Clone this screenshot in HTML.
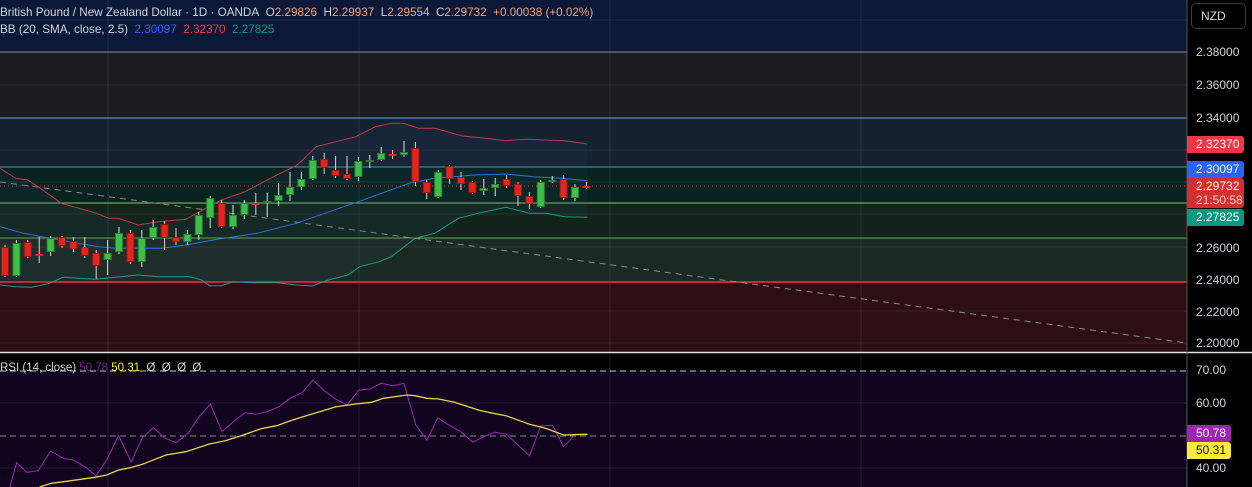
<!DOCTYPE html>
<html><head><meta charset="utf-8"><style>
html,body{margin:0;padding:0;background:#000;width:1252px;height:487px;overflow:hidden;font-family:"Liberation Sans",sans-serif}
#c{position:absolute;left:0;top:0}
.t{position:absolute;font-size:11.7px;color:#d1d4dc;white-space:nowrap}
.lbl{position:absolute;left:1187px;width:57px;font-size:12px;color:#fff;padding-left:9px;box-sizing:border-box;border-radius:0 3px 3px 0;line-height:17px}
.sc{position:absolute;left:1196px;font-size:12px;color:#d1d4dc}
</style></head><body>
<svg id="c" width="1252" height="487" xmlns="http://www.w3.org/2000/svg"></svg>
<div class="t" style="left:0;top:6px">British Pound / New Zealand Dollar · 1D · OANDA&nbsp; O<span style="color:#f7a27a">2.29826</span>&nbsp; H<span style="color:#f7a27a">2.29937</span>&nbsp; L<span style="color:#f7a27a">2.29554</span>&nbsp; C<span style="color:#f7a27a">2.29732</span>&nbsp; <span style="color:#f7a27a">+0.00038 (+0.02%)</span></div>
<div class="t" style="left:0;top:23px">BB (20, SMA, close, 2.5)&nbsp; <span style="color:#2962ff">2.30097</span>&nbsp; <span style="color:#f23645">2.32370</span>&nbsp; <span style="color:#089981">2.27825</span></div>
<div class="t" style="left:0;top:362px;font-size:11.5px">RSI (14, close) <span style="color:#7b1fa2">50.78</span> <span style="color:#ffeb3b">50.31</span>&nbsp; Ø&nbsp; Ø&nbsp; Ø&nbsp; Ø</div>
<div style="position:absolute;left:1191px;top:3px;width:55px;height:26px;border:1px solid #3a3a3a;border-radius:5px;box-sizing:border-box;color:#d1d4dc;font-size:12px;line-height:24px;padding-left:9px">NZD</div>
<div class="sc" style="top:45px">2.38000</div>
<div class="sc" style="top:78px">2.36000</div>
<div class="sc" style="top:111px">2.34000</div>
<div class="sc" style="top:241px">2.26000</div>
<div class="sc" style="top:273px">2.24000</div>
<div class="sc" style="top:305px">2.22000</div>
<div class="sc" style="top:336px">2.20000</div>
<div class="sc" style="top:363px">70.00</div>
<div class="sc" style="top:396px">60.00</div>
<div class="sc" style="top:461px">40.00</div>
<div class="lbl" style="top:136px;background:#f23645">2.32370</div>
<div class="lbl" style="top:161px;background:#2962ff">2.30097</div>
<div class="lbl" style="top:178px;background:#d32f2f;line-height:14px;height:30px;padding-top:1px">2.29732<br><span style="color:#ffc9c9">21:50:58</span></div>
<div class="lbl" style="top:209px;background:#089981">2.27825</div>
<div class="lbl" style="top:425px;background:#9c27b0;width:44px">50.78</div>
<div class="lbl" style="top:442px;background:#ffeb3b;color:#111;width:44px">50.31</div>
<script>
var s=document.getElementById('c'),h='';
function R(x,y,w,hh,f){h+='<rect x="'+x+'" y="'+y+'" width="'+w+'" height="'+hh+'" fill="'+f+'"/>';}
function L(x1,y1,x2,y2,c,extra){h+='<line x1="'+x1+'" y1="'+y1+'" x2="'+x2+'" y2="'+y2+'" stroke="'+c+'" '+(extra||'')+'/>';}
var W=1187;
R(0,0,W,52,'#0b1838');R(0,52,W,66,'#1b1c1f');R(0,118,W,49,'#15212f');R(0,167,W,36,'#08221f');
R(0,203,W,35,'#12241a');R(0,238,W,44,'#1b2a20');R(0,282,W,70,'#2d0f13');
R(0,353,W,18,'#000');R(0,371,W,116,'#11041e');
[20,85,150,182,214,247,311,343].forEach(function(y){L(0,y,W,y,'rgba(255,255,255,0.08)');});
[403,468].forEach(function(y){L(0,y,W,y,'rgba(255,255,255,0.1)');});
[108,359,610,861].forEach(function(x){L(x,0,x,487,'rgba(255,255,255,0.09)');});
L(0,52,W,52,'#8a8f9a');L(0,118,W,118,'#6aa0d8');L(0,167,W,167,'#3aa89a');L(0,203,W,203,'#7ec87a');L(0,238,W,238,'#6aa860');L(0,282,W,282,'#e53935','stroke-width="1.5"');
L(0,352.5,1252,352.5,'#e0e0e0','stroke-width="1.5"');
L(1187,0,1187,487,'#555');
L(0,182,W,343,'#8a8a8a','stroke-dasharray="6 5"');
L(0,186,W,186,'#d32f2f','stroke-dasharray="1 3"');
L(0,371,W,371,'#ccc','stroke-dasharray="6 4"');L(0,436,W,436,'#888','stroke-dasharray="6 4"');
function P(pts,c,w,sx){var d=pts.map(function(p,i){return (i?'L':'M')+(p[0]/2.53).toFixed(1)+' '+(sx(p[1])).toFixed(1);}).join(' ');h+='<path d="'+d+'" fill="none" stroke="'+c+'" stroke-width="'+w+'"/>';}
var up=[[0,505],[40,535],[70,540],[100,563],[155,610],[200,625],[245,640],[275,655],[300,655],[350,675],[400,665],[470,658],[520,625],[560,600],[620,575],[700,525],[750,497],[800,440],[850,425],[900,410],[950,380],[990,370],[1020,370],[1060,385],[1100,385],[1170,408],[1230,415],[1280,422],[1330,418],[1430,422],[1486,432]];
var mid=[[0,680],[60,700],[150,720],[250,740],[290,745],[410,745],[470,735],[550,718],[650,700],[750,670],[850,628],[900,608],[1000,565],[1040,548],[1100,535],[1200,525],[1280,522],[1350,530],[1420,535],[1486,542]];
var lo=[[0,855],[40,860],[80,862],[120,852],[160,832],[240,838],[280,833],[350,825],[400,830],[480,830],[510,840],[530,857],[560,857],[590,845],[640,848],[700,848],[750,855],[790,858],[830,840],[880,825],[910,800],[960,785],[990,770],[1050,715],[1100,700],[1160,655],[1210,640],[1280,622],[1340,640],[1380,640],[1430,650],[1486,652]];
var d3=function(y){return y/3;};
var fd=up.map(function(p,i){return (i?'L':'M')+(p[0]/2.53).toFixed(1)+' '+(p[1]/3).toFixed(1);}).join(' ');
lo.slice().reverse().forEach(function(p){fd+=' L'+(p[0]/2.53).toFixed(1)+' '+(p[1]/3).toFixed(1);});
h+='<path d="'+fd+'Z" fill="rgba(40,80,140,0.10)"/>';
P(up,'#c2394a',1,d3);P(mid,'#2f6fe0',1,d3);P(lo,'#1f9a86',1,d3);
var C=[[247,276,245,277],[276,243,240,277],[242,257,240,258],[254,254,237,263],[252,238,236,256],[237,246,236,248],[241,249,237,252],[247,256,237,258],[253,266,250,279],[260,253,240,275],[252,233,227,254],[233,262,230,264],[262,238,230,267],[238,227,220,240],[224,238,221,250],[237,242,228,245],[242,234,230,245],[235,215,212,240],[218,198,196,228],[203,227,200,228],[227,215,205,229],[215,203,200,219],[203,203,193,215],[203,201,193,217],[201,195,183,206],[195,187,172,201],[187,179,172,190],[179,160,156,180],[159,168,153,174],[170,176,156,178],[174,179,156,180],[177,161,157,181],[162,160,155,168],[160,153,147,161],[154,154,150,159],[155,152,141,157],[148,182,142,186],[182,193,180,199],[197,172,170,198],[166,179,165,184],[177,184,172,190],[182,193,181,194],[191,188,179,195],[188,184,178,196],[179,186,175,188],[184,196,182,206],[196,204,192,209],[207,182,180,208],[182,180,176,183],[179,198,175,200],[198,187,184,201],[186,186,182,189]];
C.forEach(function(c,i){var x=5+i*11.4,g=c[1]<c[0],col=g?'#3fbf4a':'#e3261d';
L(x.toFixed(1),c[2],x.toFixed(1),c[3],g?'#cfe9cf':'#f2c7c0');
var t=Math.min(c[0],c[1]),b=Math.max(c[0],c[1]);if(b-t<2){b=t+2;}
R((x-4).toFixed(1),t,8,b-t,col);
if(c[0]!=c[1])h+='<rect x="'+(x-3.5).toFixed(1)+'" y="'+(t+.5)+'" width="7" height="'+(b-t-1)+'" fill="none" stroke="rgba(0,0,0,0.35)"/>';});
var r3=function(y){return 270+y/3;};
var rsi=[[25,651],[42,578],[68,607],[97,602],[128,543],[160,565],[185,570],[215,590],[243,617],[270,570],[300,497],[332,576],[360,503],[388,473],[418,505],[446,518],[476,490],[504,440],[532,402],[562,485],[590,455],[620,428],[648,433],[676,425],[706,410],[734,385],[764,368],[792,330],[820,362],[850,388],[878,405],[908,360],[936,357],[964,340],[994,347],[1022,340],[1052,465],[1080,510],[1108,443],[1138,467],[1166,485],[1196,517],[1224,500],[1252,487],[1282,493],[1310,525],[1340,557],[1368,468],[1398,466],[1426,530],[1456,493],[1486,492]];
var ma=[[100,651],[130,640],[180,632],[240,622],[270,615],[300,600],[330,593],[360,583],[420,555],[470,545],[530,522],[570,512],[610,497],[660,476],[700,467],[740,450],[800,428],[850,410],[900,402],[940,397],[970,385],[1030,375],[1050,377],[1080,385],[1110,387],[1150,397],[1210,420],[1240,428],[1280,437],[1340,463],[1380,475],[1426,495],[1486,493]];
P(rsi,'#9c27b0',1,r3);P(ma,'#e8d44a',1.3,r3);
s.innerHTML=h;
</script>
</body></html>
